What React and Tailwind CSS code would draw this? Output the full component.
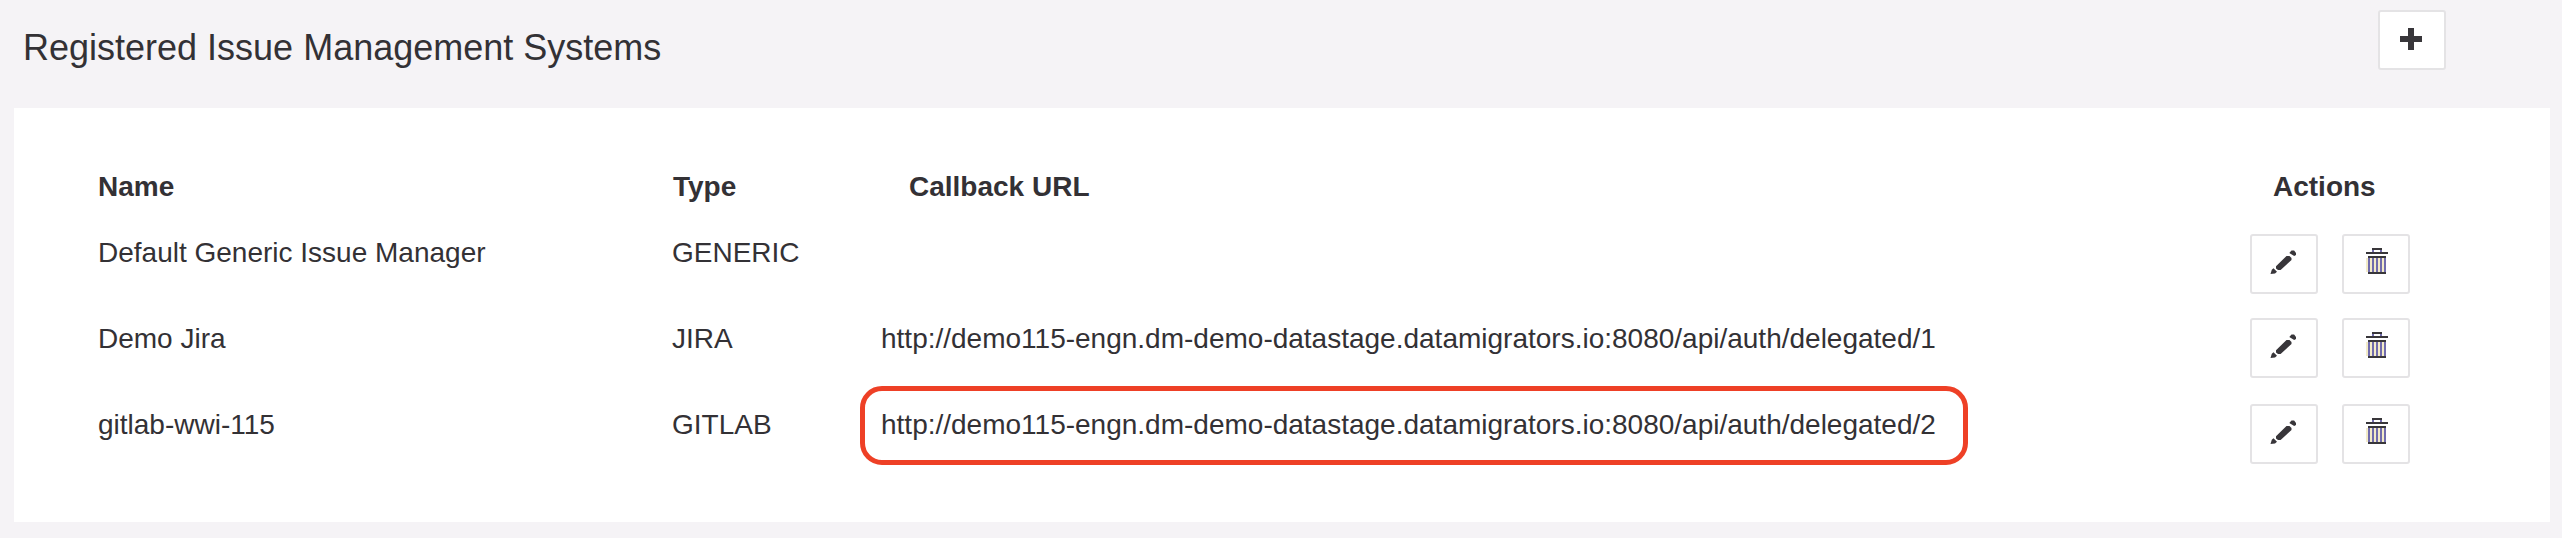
const systems = [
  { name: 'Default Generic Issue Manager', type: 'GENERIC', url: '', first: true },
  { name: 'Demo Jira', type: 'JIRA', url: 'http://demo115-engn.dm-demo-datastage.datamigrators.io:8080/api/auth/delegated/1' },
  {
    name: 'gitlab-wwi-115',
    type: 'GITLAB',
    url: 'http://demo115-engn.dm-demo-datastage.datamigrators.io:8080/api/auth/delegated/2',
    highlighted: true,
  },
];

function PlusIcon() {
  return (
    <svg className="h-14 w-16" viewBox="0 0 64 56" fill="#38363a" shapeRendering="crispEdges">
      <path d="M28 16h6v8h8v6h-8v8h-6v-8h-8v-6h8z" />
    </svg>
  );
}

function PencilIcon() {
  return (
    <svg className="h-14 w-16" viewBox="0 0 64 56" fill="#38363a">
      <path d="M24 30.3 34.5 20h3l2 2v2L28.6 34H26l-2-1.5zM37.3 17l2.2-2.5h2.6L44 17v2l-1.8 1zM18.5 38l1.3-4.2 1.7-1.6 3.5 3.6-2 1.6z" />
    </svg>
  );
}

function TrashIcon() {
  return (
    <svg className="h-14 w-16" viewBox="0 0 64 56" shapeRendering="crispEdges">
      <path d="M22 22h2v14h-2zM26 22h2v14h-2zM30 22h2v14h-2zM34 22h2v14h-2zM38 22h2v14h-2z" fill="#f3ebc8" />
      <path d="M24 22h2v14h-2zM28 22h2v14h-2zM32 22h2v14h-2zM36 22h2v14h-2zM40 22h2v14h-2zM28 14h2v2h-2zM36 14h2v2h-2z" fill="#716cac" />
      <path d="M28 12h10v2h-10zM22 16h22v2h-22zM24 20h18v2h-18zM24 36h18v2h-18z" fill="#38363a" />
    </svg>
  );
}

function IconButton({ label, children }) {
  return (
    <button
      type="button"
      aria-label={label}
      className="flex h-[60px] w-[68px] shrink-0 items-center justify-center rounded-[3px] border-2 border-[#e4e3e5] bg-white"
    >
      {children}
    </button>
  );
}

export default function App() {
  return (
    <div className="h-[538px] w-[2562px] overflow-hidden bg-[#f5f3f6] pr-3 pl-3.5 font-['Liberation_Sans',Arial,sans-serif] text-[28px] leading-10 text-[#333135]">
      <header className="flex h-[108px] items-start justify-between pt-2.5 pr-[104px] pl-[9px]">
        <h1 className="pt-[13px] text-[36px] leading-[50px]">Registered Issue Management Systems</h1>
        <IconButton label="Add">
          <PlusIcon />
        </IconButton>
      </header>
      <main className="h-[414px] bg-white pt-[59px] pl-[84px]">
        <div className="grid h-[65px] grid-cols-[574px_209px_1369px_1fr] font-bold">
          <div>Name</div>
          <div className="pl-px">Type</div>
          <div className="pl-7">Callback URL</div>
          <div className="pl-[23px]">Actions</div>
        </div>
        {systems.map((s) => (
          <div key={s.type} className="grid h-[86px] grid-cols-[574px_209px_1369px_1fr] whitespace-nowrap">
            <div className="pt-px">{s.name}</div>
            <div className="pt-px">{s.type}</div>
            <div className="pt-px">
              <span className="relative inline-block">
                {s.url}
                {s.highlighted && (
                  <span className="absolute -top-[19px] -left-[21px] h-[79px] w-[1108px] rounded-[22px] border-[5px] border-[#ee4026]" />
                )}
              </span>
            </div>
            <div className={s.first ? 'flex gap-6 pt-0.5' : 'flex gap-6'}>
              <IconButton label="Edit">
                <PencilIcon />
              </IconButton>
              <IconButton label="Delete">
                <TrashIcon />
              </IconButton>
            </div>
          </div>
        ))}
      </main>
    </div>
  );
}
